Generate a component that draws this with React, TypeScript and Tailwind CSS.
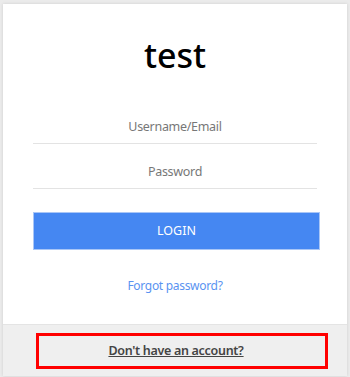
export default function App() {
  return (
    <div
      className="w-[350px] h-[377px] bg-[#ebebeb] pt-[4px] px-[3px] overflow-hidden"
      style={{ fontFamily: '"Noto Sans", "Open Sans", sans-serif' }}
    >
      <div className="w-[344px] bg-white shadow-[0_0_3px_rgba(0,0,0,0.12)]">
        <h1 className="pt-[31px] text-center text-[34px] leading-[40px] font-medium text-black">
          test
        </h1>

        <form className="px-[30px] mt-[24px]" onSubmit={(e) => e.preventDefault()}>
          <input
            type="text"
            placeholder="Username/Email"
            className="block w-full h-[45px] pt-[10px] border-b border-[#e3e3e3] text-center text-[12.5px] tracking-[-0.3px] text-[#555] placeholder:text-[#777] outline-none"
          />
          <input
            type="password"
            placeholder="Password"
            className="block w-full h-[45px] pt-[10px] border-b border-[#e3e3e3] text-center text-[12.5px] tracking-[-0.3px] text-[#555] placeholder:text-[#777] outline-none"
          />
          <button
            type="submit"
            className="mt-[23px] block w-[287px] h-[38px] bg-[#4587f2] text-white text-[12.5px] border border-[#a9c6f7]"
          >
            LOGIN
          </button>
          <div className="mt-[22px] pb-[28px] text-center">
            <a href="#" className="text-[12px] tracking-[-0.3px] leading-[16px] text-[#5a93f1]">
              Forgot password?
            </a>
          </div>
        </form>

        <div className="bg-[#efefef] border-t border-[#e4e4e4] pt-[8px] pb-[7px]">
          <div className="ml-[33px] mr-[19px] h-[36px] border-[3px] border-[#ff0000] flex items-center justify-center pr-[12px]">
            <a href="#" className="text-[12.5px] tracking-[-0.3px] font-semibold text-[#444] underline">
              Don't have an account?
            </a>
          </div>
        </div>
      </div>
    </div>
  );
}
